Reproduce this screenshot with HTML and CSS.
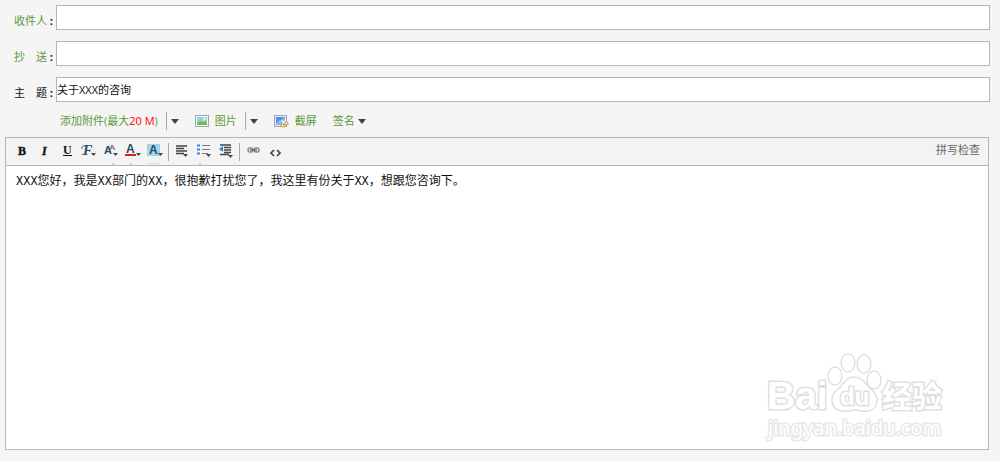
FILE: index.html
```html
<!DOCTYPE html>
<html lang="zh-CN">
<head>
  <meta charset="UTF-8">
  <title>写邮件</title>
  <link rel="stylesheet" href="styles.css">
</head>
<body>

<form class="compose">

  <!-- 收件人 / 抄送 / 主题 -->
  <div class="row">
    <label for="to"><span class="green">收件人</span> <b>:</b></label>
    <input type="text" id="to">
  </div>
  <div class="row">
    <label for="cc"><span class="green">抄　送</span> <b>:</b></label>
    <input type="text" id="cc">
  </div>
  <div class="row">
    <label for="subject">主　题 <b>:</b></label>
    <input type="text" id="subject" value="关于XXX的咨询">
  </div>

  <!-- 附件、图片、截屏、签名 -->
  <div class="attach">
    <div class="attach-item">
      <button type="button">添加附件(最大<span class="red">20 M</span>)</button>
      <button type="button" class="drop" aria-label="更多附件"><i class="caret"></i></button>
    </div>
    <div class="attach-item">
      <button type="button">
        <svg width="14" height="12" viewBox="0 0 14 12">
          <rect x=".5" y=".5" width="13" height="11" fill="#fff" stroke="#9aa9ae"/>
          <rect x="2" y="2" width="10" height="8" fill="#8fd0f5"/>
          <circle cx="9.5" cy="4" r="1.4" fill="#fff6a8"/>
          <path d="M2 8q3-3 6-1 2-1 4 0v3H2z" fill="#72bd33"/>
        </svg>
        图片
      </button>
      <button type="button" class="drop" aria-label="更多图片"><i class="caret"></i></button>
    </div>
    <div class="attach-item">
      <button type="button">
        <svg width="15" height="13" viewBox="0 0 15 13">
          <rect x=".5" y=".5" width="12" height="11" fill="#e6eef8" stroke="#9aa5b3"/>
          <rect x="2" y="2" width="9" height="8" fill="#4f8fde"/>
          <path d="M2 8l3-3 2 1 3-4 1 1v7H2z" fill="#86b8ee"/>
          <path d="M7 5l5 4M12 5l-4 4" stroke="#f4f4f4" stroke-width="1.5"/>
          <circle cx="8.500" cy="10.500" r="1.500" fill="#fff" stroke="#d79a35" stroke-width="1.200"/>
          <circle cx="12.500" cy="8.500" r="1.500" fill="#fff" stroke="#d79a35" stroke-width="1.200"/>
        </svg>
        截屏
      </button>
    </div>
    <div class="attach-item">
      <button type="button" class="sign">签名<i class="caret"></i></button>
    </div>
  </div>

  <!-- 编辑器 -->
  <div class="editor">
    <div class="toolbar">
      <button type="button" aria-label="加粗">
        <svg class="icon" viewBox="0 0 22 27"><text class="letter heavy" x="6" y="17">B</text></svg>
      </button>
      <button type="button" aria-label="斜体">
        <svg class="icon" viewBox="0 0 22 27"><text class="letter heavy italic" x="8" y="17">I</text></svg>
      </button>
      <button type="button" aria-label="下划线">
        <svg class="icon" viewBox="0 0 22 27"><text class="letter" x="7" y="16">U</text><path d="M7 17.500h9" stroke="#111"/></svg>
      </button>
      <button type="button" aria-label="字体">
        <svg class="icon" viewBox="0 0 22 27"><text class="letter script" x="5" y="17">F</text><path d="M4 11q-1-4 4-3M4 16q1 1 3 0" fill="none" stroke="#375e70"/><path class="tri" d="M13 15h5l-2.500 3z"/></svg>
      </button>
      <button type="button" aria-label="字号">
        <svg class="icon" viewBox="0 0 22 27"><text class="letter blue size" x="4" y="16">A</text><path d="M10 12l2-5 3 5M11 10h3" fill="none" stroke="#666"/><path class="tri" d="M13 15h5l-2.500 3z"/><path d="M12 26h2" stroke="#aaa"/></svg>
      </button>
      <button type="button" aria-label="文字颜色">
        <svg class="icon" viewBox="0 0 22 27"><text class="letter blue" x="4" y="15">A</text><path d="M3 17h11" stroke="#e3191b" stroke-width="2"/><path class="tri" d="M14 15h5l-2.500 3z"/><path d="M8 26h2" stroke="#aaa"/></svg>
      </button>
      <button type="button" aria-label="背景颜色">
        <svg class="icon" viewBox="0 0 22 27"><path d="M3 6h13v12H3z" fill="#a3d3ea"/><text class="letter blue" x="5" y="16">A</text><path class="tri" d="M14 15h5l-2.500 3z"/><path d="M4 25.500h11" stroke="#ddd"/></svg>
      </button>
      <span class="sep"></span>
      <button type="button" aria-label="对齐">
        <svg class="icon" viewBox="0 0 22 27"><path d="M5 8h11M5 10.500h8M5 13h11M5 15.500h8" stroke="#444" stroke-width="1.500"/><path class="tri" d="M12 16h5l-2.500 3z"/></svg>
      </button>
      <button type="button" aria-label="列表">
        <svg class="icon" viewBox="0 0 22 27"><path d="M9 7.500h8M9 11.500h8M9 15.500h6" stroke="#777"/><path d="M4 7.500h3M4 11.500h3M4 15.500h3" stroke="#3285e8" stroke-width="2"/><path class="tri" d="M13 16h5l-2.500 3z"/><path d="M6 26h2" stroke="#aaa"/></svg>
      </button>
      <button type="button" aria-label="缩进">
        <svg class="icon" viewBox="0 0 22 27"><path d="M5 7h11M9 9.500h7M9 12h7M9 14.500h7M5 16.500h9" stroke="#444" stroke-width="1.500"/><path d="M4 11l4-3v6z" fill="#2688df"/><path class="tri" d="M13 17h5l-2.500 3z"/></svg>
      </button>
      <span class="sep"></span>
      <button type="button" aria-label="链接">
        <svg class="icon" viewBox="0 0 22 27"><g fill="none" stroke="#8b8b8b" stroke-width="1.500"><rect x="6" y="10" width="5" height="4" rx="2"/><rect x="12" y="10" width="5" height="4" rx="2"/><path d="M8 12h7" stroke="#666"/></g></svg>
      </button>
      <button type="button" aria-label="源代码">
        <svg class="icon" viewBox="0 0 22 27"><path d="M10 12l-3 3 3 3M13 12l3 3-3 3" fill="none" stroke="#444" stroke-width="1.700"/></svg>
      </button>
      <button type="button" class="spell">拼写检查</button>
    </div>

    <div class="content">
      <textarea aria-label="正文" spellcheck="false">XXX您好，我是XX部门的XX，很抱歉打扰您了，我这里有份关于XX，想跟您咨询下。</textarea>

      <!-- 水印 -->
      <svg class="watermark" width="190" height="92" viewBox="0 0 190 92">
        <text class="mark" x="4" y="59" font-size="39">Bai</text>
        <ellipse cx="72" cy="26" rx="7" ry="9"/>
        <ellipse cx="85" cy="13" rx="7" ry="9"/>
        <ellipse cx="101" cy="14" rx="7" ry="9"/>
        <ellipse cx="111" cy="30" rx="7" ry="9"/>
        <path d="M91 27c-9 0-11 9-18 14-6 5-6 19 6 20 6 1 8-1 13-1s8 2 13 1c11-2 11-14 5-20-7-6-10-14-19-14z"/>
        <text class="mark" x="77" y="55" font-size="24">du</text>
        <text class="mark cjk" x="119" y="57" font-size="30">经验</text>
        <text class="mark url" x="5" y="85" font-size="20">jingyan.baidu.com</text>
      </svg>
    </div>
  </div>

</form>

</body>
</html>
```
FILE: styles.css
```css
body {
  margin: 0;
  background-color: #f5f5f5;
  color: #111;
  font-family: "Open Sans", "Noto Sans CJK SC", sans-serif;
  font-size: 11px;
}

.compose {
  box-sizing: border-box;
  display: flex;
  flex-direction: column;
  min-height: 100vh;
  padding: 5px 10px 11px 5px;
}

button,
input,
textarea {
  font: inherit;
  color: inherit;
}

button {
  padding: 0;
  border: 0;
  background: none;
  cursor: pointer;
}

.green {
  color: #5b9a38;
}

.red {
  color: #f00;
}

/* 表单行 */
.row {
  display: flex;
  margin-bottom: 11px;
}

.row label {
  box-sizing: border-box;
  width: 51px;
  padding: 7px 0 0 9px;
  line-height: 18px;
  white-space: nowrap;
}

.row input {
  box-sizing: border-box;
  flex: 1;
  min-width: 0;
  height: 25px;
  padding: 0 0 2px;
  border: 1px solid #b5b5b5;
  background-color: #fff;
}

/* 附件栏 */
.attach {
  display: flex;
  align-items: center;
  gap: 16px;
  height: 18px;
  margin: -1px 0 7px 55px;
  color: #5b9a38;
  line-height: 18px;
}

.attach-item,
.attach-item button {
  display: flex;
  align-items: center;
}

.attach-item svg {
  margin-right: 6px;
}

.attach-item .drop {
  height: 18px;
  margin-left: 8px;
  padding-left: 4px;
  border-left: 1px solid #aaa;
}

.sign {
  gap: 3px;
}

.caret {
  border: 4px solid transparent;
  border-top: 5px solid #444;
  border-bottom: 0;
}

/* 编辑器 */
.editor {
  display: flex;
  flex: 1;
  flex-direction: column;
  margin-right: 1px;
  border: 1px solid #b5b5b5;
  background-color: #fff;
}

.toolbar {
  display: flex;
  align-items: center;
  height: 27px;
  padding: 0 8px 0 6px;
  border-bottom: 1px solid #b5b5b5;
  background-color: #f3f3f3;
}

.icon {
  display: block;
  width: 22px;
  height: 27px;
}

.letter {
  font-family: "Liberation Serif", serif;
  font-size: 12px;
  font-weight: bold;
  fill: #111;
}

.heavy {
  stroke: #111;
  stroke-width: 0.4px;
}

.italic {
  font-style: italic;
}

.blue {
  font-family: "Liberation Sans", sans-serif;
  fill: #294c5d;
}

.script {
  font-size: 14px;
  font-style: italic;
  fill: #294c5d;
}

.size {
  font-size: 11px;
}

.tri {
  fill: #444;
}

.sep {
  width: 1px;
  height: 18px;
  margin: 0 2px;
  background-color: #aaa;
}

.spell {
  align-self: flex-start;
  margin-left: auto;
  color: #666;
  line-height: 24px;
}

.content {
  position: relative;
  display: flex;
  flex: 1;
}

.content textarea {
  flex: 1;
  padding: 7px 10px;
  border: 0;
  outline: none;
  resize: none;
  background: none;
  font-family: "Liberation Mono", "Noto Sans CJK SC", monospace;
  font-size: 12px;
  line-height: 18px;
}

/* 水印 */
.watermark {
  position: absolute;
  right: 35px;
  bottom: 7px;
  fill: #fff;
  stroke: #e0e0e0;
  stroke-width: 1.5px;
  pointer-events: none;
}

.mark {
  font-family: "Liberation Sans", sans-serif;
  font-weight: bold;
  paint-order: stroke;
  stroke-width: 3px;
}

.cjk {
  font-family: "Noto Sans CJK SC", sans-serif;
}

.url {
  font-family: "Noto Sans", sans-serif;
  font-weight: normal;
  stroke: #e8e8e8;
}
```
